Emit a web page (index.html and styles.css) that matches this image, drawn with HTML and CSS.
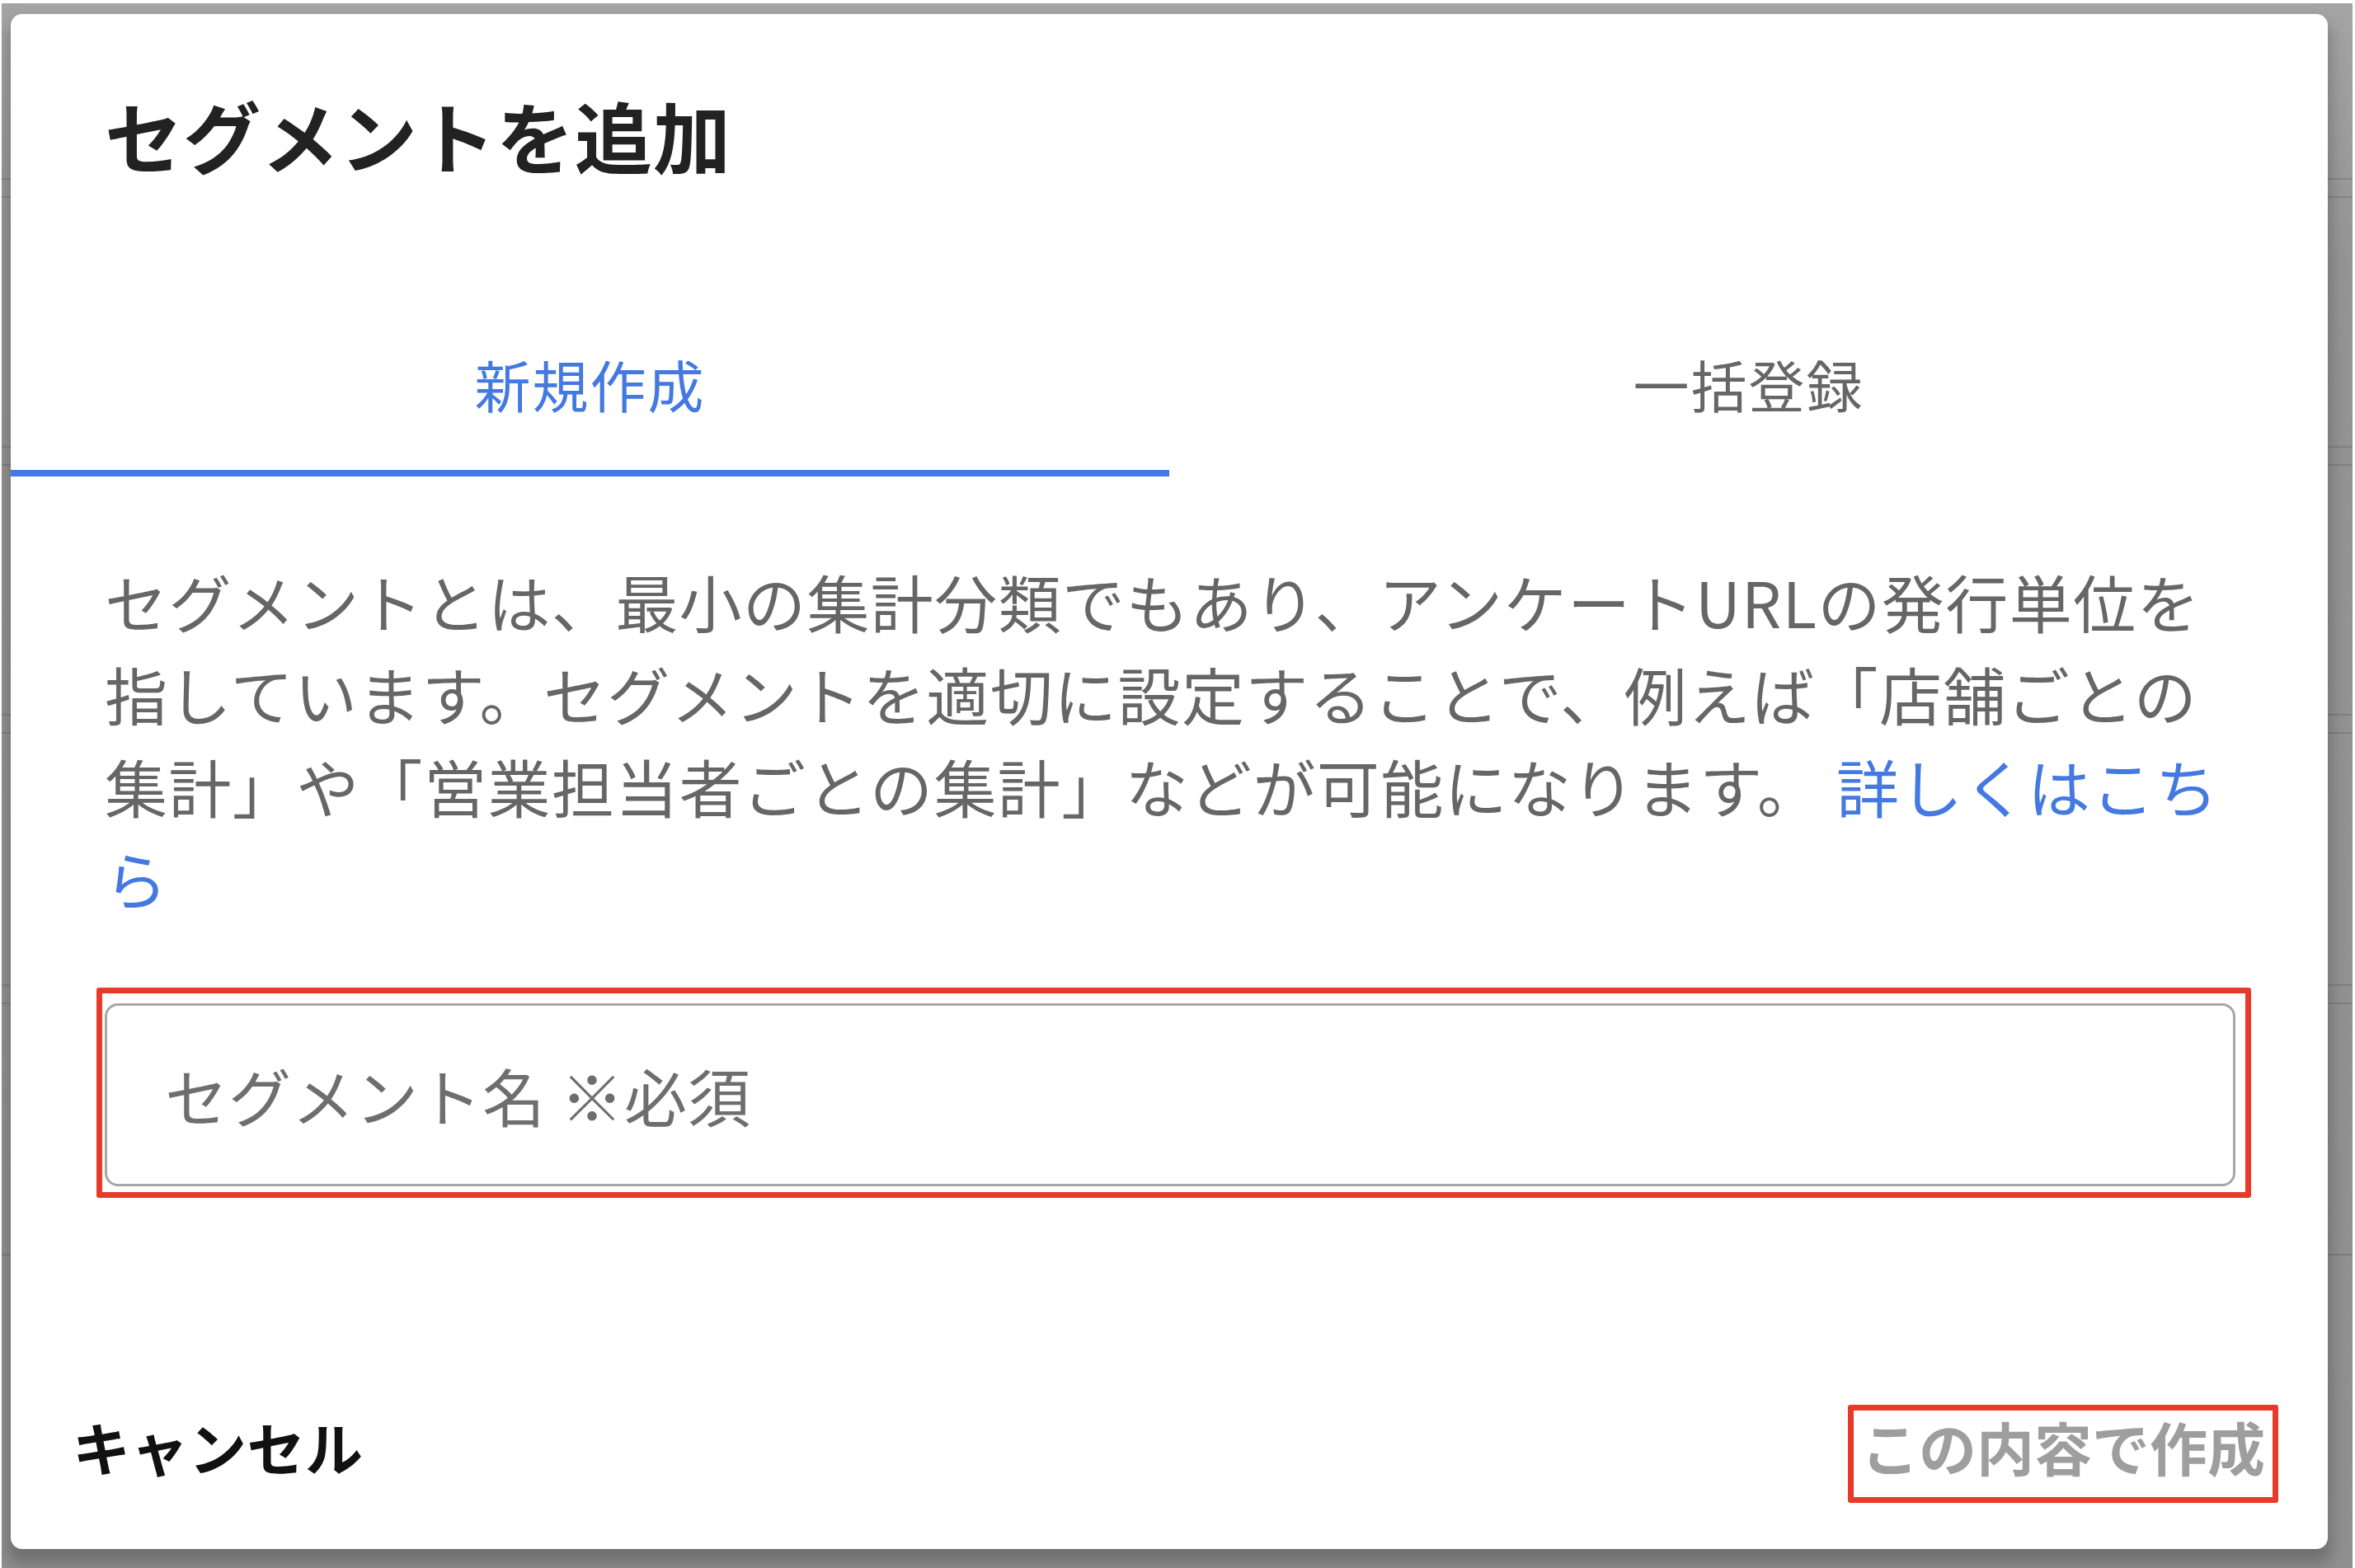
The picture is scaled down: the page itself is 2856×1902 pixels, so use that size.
FILE: index.html
```html
<!DOCTYPE html>
<html lang="ja">
<head>
<meta charset="utf-8">
<title>セグメントを追加</title>
<link rel="stylesheet" href="styles.css">
</head>
<body>
<div class="screen">
  <div class="rows">
    <div class="row"></div>
    <div class="row"></div>
    <div class="row"></div>
    <div class="row"></div>
    <div class="row row-last"></div>
  </div>
  <div class="modal">
    <h1 class="title">セグメントを追加</h1>
    <div class="tabs">
      <div class="tab tab-active">新規作成</div>
      <div class="tab">一括登録</div>
    </div>
    <p class="desc">セグメントとは、最小の集計分類でもあり、アンケートURLの発行単位を指しています。セグメントを適切に設定することで、例えば「店舗ごとの集計」や「営業担当者ごとの集計」などが可能になります。 <a class="link" href="#">詳しくはこちら</a></p>
    <div class="field">
      <input class="input" type="text" placeholder="セグメント名 ※必須">
      <span class="mark mark-field"></span>
    </div>
    <div class="footer">
      <button class="btn btn-cancel" type="button">キャンセル</button>
      <button class="btn btn-create" type="button">この内容で作成<span class="mark mark-btn"></span></button>
    </div>
  </div>
</div>
</body>
</html>
```
FILE: styles.css
```css
html, body {
  margin: 0;
  padding: 0;
  background: #ffffff;
}
body {
  width: 2856px;
  height: 1902px;
  overflow: hidden;
  font-family: "Noto Sans CJK JP", "Noto Sans", sans-serif;
}
.screen {
  position: relative;
  margin: 4px 3px 0 2px;
  height: 1898px;
  background: linear-gradient(#a4a4a4 0, #949494 320px, #8f8f8f 100%);
  overflow: hidden;
}
.rows {
  display: flex;
  flex-direction: column;
}
.row {
  height: 20px;
  border-top: 2px solid rgba(0, 0, 0, 0.12);
  border-bottom: 2px solid rgba(0, 0, 0, 0.12);
  margin-top: 301px;
}
.row:first-child {
  margin-top: 212px;
}
.row:nth-child(4) {
  margin-top: 304px;
}
.row-last {
  border-bottom: none;
  margin-top: 303px;
}
.modal {
  position: absolute;
  left: 11px;
  top: 13px;
  width: 2810px;
  height: 1862px;
  background: #ffffff;
  border-radius: 14px;
  box-shadow: 0 14px 18px 4px rgba(0, 0, 0, 0.22);
  display: flex;
  flex-direction: column;
  box-sizing: border-box;
}
.title {
  margin: 0;
  padding: 76px 114px 0;
  font-size: 94px;
  line-height: 140px;
  font-weight: 700;
  color: #222222;
  letter-spacing: 1px;
}
.tabs {
  display: flex;
}
.tab {
  flex: 1;
  text-align: center;
  padding: 183px 0 54px;
  font-size: 68px;
  line-height: 100px;
  letter-spacing: 2px;
  color: #666666;
  border-bottom: 8px solid transparent;
}
.tab-active {
  color: #4479e1;
  border-bottom-color: #4479e1;
}
.desc {
  margin: 95px 0 0;
  padding: 0 114px;
  font-size: 76px;
  line-height: 112px;
  letter-spacing: 1.4px;
  color: #666666;
}
.link {
  color: #4479e1;
  text-decoration: none;
}
.field {
  position: relative;
  margin: 96px 112px 0 114px;
}
.input {
  display: block;
  box-sizing: border-box;
  width: 100%;
  height: 222px;
  margin: 0;
  padding: 0 0 0 70px;
  border: 3px solid #a6a6a6;
  border-radius: 16px;
  background: #ffffff;
  font-family: "Noto Sans CJK JP", "Noto Sans", sans-serif;
  font-size: 76px;
  letter-spacing: 1px;
  color: #333333;
  outline: none;
}
.input::placeholder {
  color: #6e6e6e;
  opacity: 1;
}
.mark {
  position: absolute;
  box-sizing: border-box;
  border: 7px solid #e8392a;
  border-radius: 3px;
  pointer-events: none;
}
.mark-field {
  top: -19px;
  left: -10px;
  right: -19px;
  bottom: -14px;
}
.footer {
  margin-top: auto;
  display: flex;
  justify-content: space-between;
  align-items: flex-end;
  padding: 0 67px 63px 62px;
}
.btn {
  position: relative;
  margin: 0;
  border: none;
  background: transparent;
  font-family: "Noto Sans CJK JP", "Noto Sans", sans-serif;
  font-size: 70px;
  line-height: 87px;
  font-weight: 700;
  cursor: pointer;
}
.btn-cancel {
  padding: 0 13px 18px;
  color: #111111;
  letter-spacing: 0.5px;
}
.btn-create {
  padding: 0 9px 18px;
  color: #9e9e9e;
}
.mark-btn {
  top: -7px;
  left: -7px;
  right: -7px;
  bottom: -7px;
}
```
